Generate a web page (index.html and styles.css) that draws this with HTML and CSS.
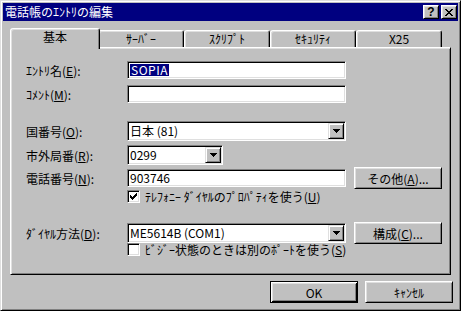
FILE: index.html
```html
<!DOCTYPE html>
<html lang="ja">
<head>
    <meta charset="UTF-8">
    <title>電話帳のｴﾝﾄﾘの編集</title>
    <link rel="stylesheet" href="styles.css">
</head>
<body>

<div class="window">
    <div class="titlebar">
        <span class="title">電話帳のｴﾝﾄﾘの編集</span>
        <div class="caption-buttons">
            <span class="cap-btn">?</span>
            <span class="cap-btn">
                <svg width="8" height="7" viewBox="0 0 8 7"><path d="M0 0h2v1h1v1h2V1h1V0h2v1H7v1H6v1H5v1h1v1h1v1h1v1H6V6H5V5H3v1H2v1H0V6h1V5h1V4h1V3H2V2H1V1H0z"/></svg>
            </span>
        </div>
    </div>

    <div class="client">
        <div class="tabs">
            <div class="tab active">基本</div>
            <div class="tab">ｻｰﾊﾞｰ</div>
            <div class="tab">ｽｸﾘﾌﾟﾄ</div>
            <div class="tab">ｾｷｭﾘﾃｨ</div>
            <div class="tab">X25</div>
        </div>

        <div class="panel">
            <div class="row r1">
                <span class="label">ｴﾝﾄﾘ名(<u>E</u>):</span>
                <div class="edit wide"><span class="sel">SOPIA</span></div>
            </div>
            <div class="row r2">
                <span class="label">ｺﾒﾝﾄ(<u>M</u>):</span>
                <div class="edit wide"></div>
            </div>
            <div class="row r3">
                <span class="label">国番号(<u>O</u>):</span>
                <div class="combo wide">
                    <span class="value">日本 (81)</span>
                    <span class="drop-btn"><svg width="7" height="4" viewBox="0 0 7 4"><path d="M0 0h7v1H6v1H5v1H4v1H3V3H2V2H1V1H0z"/></svg></span>
                </div>
            </div>
            <div class="row r4">
                <span class="label">市外局番(<u>R</u>):</span>
                <div class="combo short">
                    <span class="value">0299</span>
                    <span class="drop-btn"><svg width="7" height="4" viewBox="0 0 7 4"><path d="M0 0h7v1H6v1H5v1H4v1H3V3H2V2H1V1H0z"/></svg></span>
                </div>
            </div>
            <div class="row r5">
                <span class="label">電話番号(<u>N</u>):</span>
                <div class="edit wide"><span class="value">903746</span></div>
                <div class="btn side">その他(<u>A</u>)...</div>
            </div>
            <div class="row r6 check-row">
                <span class="check">
                    <svg width="7" height="7" viewBox="0 0 7 7"><path d="M0 2h1v3H0zM1 3h1v3H1zM2 4h1v3H2zM3 3h1v3H3zM4 2h1v3H4zM5 1h1v3H5zM6 0h1v3H6z"/></svg>
                </span>
                <span class="check-text">ﾃﾚﾌｫﾆｰ ﾀﾞｲﾔﾙのﾌﾟﾛﾊﾟﾃｨを使う(<u>U</u>)</span>
            </div>
            <div class="row r7">
                <span class="label">ﾀﾞｲﾔﾙ方法(<u>D</u>):</span>
                <div class="combo wide">
                    <span class="value">ME5614B (COM1)</span>
                    <span class="drop-btn"><svg width="7" height="4" viewBox="0 0 7 4"><path d="M0 0h7v1H6v1H5v1H4v1H3V3H2V2H1V1H0z"/></svg></span>
                </div>
                <div class="btn side">構成(<u>C</u>)...</div>
            </div>
            <div class="row r8 check-row">
                <span class="check"></span>
                <span class="check-text">ﾋﾞｼﾞｰ状態のときは別のﾎﾟｰﾄを使う(<u>S</u>)</span>
            </div>
        </div>

        <div class="footer">
            <div class="btn default">OK</div>
            <div class="btn">ｷｬﾝｾﾙ</div>
        </div>
    </div>
</div>

</body>
</html>
```

FILE: styles.css
```css
* {
    box-sizing: border-box;
}
body {
    margin: 0;
    font-family: "Noto Sans CJK JP", sans-serif;
    font-size: 12px;
    color: #000;
    background-color: #c0c0c0;
}
u {
    text-decoration: underline;
    text-underline-offset: 1px;
}
.window {
    width: 461px;
    height: 311px;
    background-color: #c0c0c0;
    border: 1px solid;
    border-color: #dfdfdf #000 #000 #dfdfdf;
    box-shadow: inset 1px 1px #fff, inset -1px -1px #808080;
    padding: 2px;
}
.titlebar {
    height: 18px;
    background-color: #000080;
    color: #fff;
    display: flex;
    align-items: center;
    padding: 0 1px 0 2px;
}
.title {
    flex: 1;
    line-height: 18px;
}
.caption-buttons {
    display: flex;
    gap: 2px;
}
.cap-btn {
    width: 16px;
    height: 14px;
    background-color: #c0c0c0;
    color: #000;
    border: 1px solid;
    border-color: #fff #000 #000 #fff;
    box-shadow: inset 1px 1px #dfdfdf, inset -1px -1px #808080;
    display: flex;
    align-items: center;
    justify-content: center;
    font-family: "Liberation Sans", sans-serif;
    font-weight: bold;
    font-size: 12px;
    line-height: 12px;
}
.client {
    padding: 7px 7px 0 7px;
}
.tabs {
    display: flex;
    align-items: flex-end;
    height: 19px;
    padding-left: 2px;
}
.tab {
    width: 86px;
    height: 17px;
    flex: none;
    background-color: #c0c0c0;
    border: 1px solid;
    border-bottom: none;
    border-color: #fff #000 transparent #fff;
    border-radius: 3px 3px 0 0;
    box-shadow: inset 1px 1px #dfdfdf, inset -1px 0 #808080;
    text-align: center;
    line-height: 15px;
}
.tab.active {
    width: 90px;
    height: 21px;
    margin: 0 -2px -2px -2px;
    line-height: 16px;
    position: relative;
    z-index: 1;
}
.panel {
    height: 228px;
    border: 1px solid;
    border-color: #fff #000 #000 #fff;
    box-shadow: inset 1px 1px #dfdfdf, inset -1px -1px #808080;
    padding: 13px 0 0 15px;
}
.row {
    display: flex;
    align-items: center;
}
.label {
    width: 101px;
    flex: none;
    white-space: nowrap;
}
.r1 { height: 18px; }
.r2 { height: 18px; margin-top: 6px; }
.r3 { height: 20px; margin-top: 18px; }
.r4 { height: 20px; margin-top: 4px; }
.r5 { height: 18px; margin-top: 4px; }
.r6 { height: 13px; margin-top: 3px; }
.r7 { height: 20px; margin-top: 20px; }
.r8 { height: 13px; margin-top: 0; }
.edit, .combo {
    background-color: #fff;
    border: 1px solid;
    border-color: #808080 #fff #fff #808080;
    box-shadow: inset 1px 1px #000, inset -1px -1px #dfdfdf;
    display: flex;
    align-items: center;
    padding: 1px 1px 1px 2px;
    white-space: nowrap;
}
.edit {
    height: 18px;
}
.combo {
    height: 20px;
}
.wide {
    width: 219px;
}
.short {
    width: 96px;
}
.sel {
    background-color: #000080;
    color: #fff;
    line-height: 12px;
    padding: 0 1px;
    letter-spacing: 0.5px;
}
.value {
    line-height: 14px;
    flex: 1;
}
.drop-btn {
    width: 16px;
    height: 16px;
    flex: none;
    background-color: #c0c0c0;
    border: 1px solid;
    border-color: #dfdfdf #000 #000 #dfdfdf;
    box-shadow: inset 1px 1px #fff, inset -1px -1px #808080;
    display: flex;
    align-items: center;
    justify-content: center;
}
.btn {
    width: 88px;
    height: 22px;
    flex: none;
    background-color: #c0c0c0;
    border: 1px solid;
    border-color: #fff #000 #000 #fff;
    box-shadow: inset 1px 1px #dfdfdf, inset -1px -1px #808080;
    display: flex;
    align-items: center;
    justify-content: center;
    white-space: nowrap;
}
.btn.side {
    margin-left: 8px;
}
.btn.default {
    border-color: #000;
    box-shadow: inset 1px 1px #fff, inset -1px -1px #000, inset 2px 2px #dfdfdf, inset -2px -2px #808080;
}
.check-row {
    padding-left: 101px;
}
.check {
    width: 13px;
    height: 13px;
    flex: none;
    background-color: #fff;
    border: 1px solid;
    border-color: #808080 #fff #fff #808080;
    box-shadow: inset 1px 1px #000, inset -1px -1px #dfdfdf;
    display: flex;
    align-items: center;
    justify-content: center;
}
.check-text {
    margin-left: 5px;
    white-space: nowrap;
}
.footer {
    display: flex;
    justify-content: flex-end;
    gap: 7px;
    margin-top: 6px;
    margin-right: -2px;
}
```
